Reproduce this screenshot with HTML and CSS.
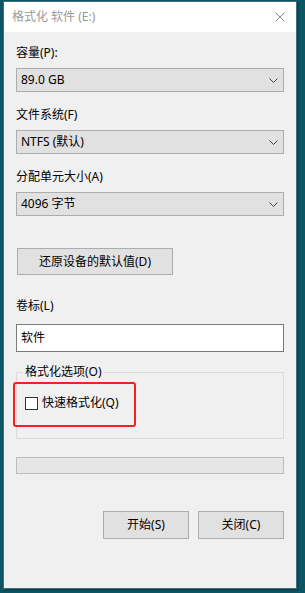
FILE: index.html
```html
<!DOCTYPE html>
<html lang="zh-CN">
<head>
<meta charset="utf-8">
<title>格式化 软件 (E:)</title>
<link rel="stylesheet" href="styles.css">
</head>
<body>
<div class="desktop">
  <div class="dialog">
    <div class="titlebar">
      <span class="title">格式化 软件 (E:)</span>
      <svg class="close" width="10" height="10" viewBox="0 0 10 10"><path d="M0.5 0.5L9.5 9.5M9.5 0.5L0.5 9.5" stroke="#8a8a8a" stroke-width="1" fill="none"/></svg>
    </div>
    <div class="content">
      <div class="field first">
        <div class="label">容量(P):</div>
        <div class="select"><span>89.0 GB</span><svg class="chev" width="9" height="5" viewBox="0 0 9 5"><path d="M0.5 0.5L4.5 4.5L8.5 0.5" stroke="#444" stroke-width="1" fill="none"/></svg></div>
      </div>
      <div class="field">
        <div class="label">文件系统(F)</div>
        <div class="select"><span>NTFS (默认)</span><svg class="chev" width="9" height="5" viewBox="0 0 9 5"><path d="M0.5 0.5L4.5 4.5L8.5 0.5" stroke="#444" stroke-width="1" fill="none"/></svg></div>
      </div>
      <div class="field">
        <div class="label">分配单元大小(A)</div>
        <div class="select"><span>4096 字节</span><svg class="chev" width="9" height="5" viewBox="0 0 9 5"><path d="M0.5 0.5L4.5 4.5L8.5 0.5" stroke="#444" stroke-width="1" fill="none"/></svg></div>
      </div>
      <div class="btn restore">还原设备的默认值(D)</div>
      <div class="field volume">
        <div class="label">卷标(L)</div>
        <div class="input">软件</div>
      </div>
      <fieldset class="group">
        <legend>格式化选项(O)</legend>
        <div class="check-row"><span class="box"></span><span>快速格式化(Q)</span></div>
      </fieldset>
      <div class="progress"></div>
      <div class="actions">
        <div class="btn action">开始(S)</div>
        <div class="btn action">关闭(C)</div>
      </div>
    </div>
    <div class="highlight"></div>
  </div>
</div>
</body>
</html>
```

FILE: styles.css
```css
html, body {
  margin: 0;
  padding: 0;
}
body {
  width: 305px;
  height: 593px;
  overflow: hidden;
  background: #0d5465;
  font-family: "Noto Sans", "Noto Sans CJK SC", sans-serif;
  font-size: 12px;
  color: #000;
}
.desktop {
  padding: 1px 0 0 3px;
}
.dialog {
  position: relative;
  width: 292px;
  height: 586px;
  border: 1px solid #3d6f7c;
  background: #f0f0f0;
  display: flex;
  flex-direction: column;
  box-shadow: 1px 1px 2px rgba(0,0,0,0.35);
}
.titlebar {
  height: 30px;
  background: #fff;
  display: flex;
  align-items: center;
  justify-content: space-between;
  padding: 0 11px 0 8px;
}
.title {
  color: #9a9a9a;
  font-size: 12px;
  line-height: 16px;
}
.close {
  display: block;
}
.content {
  padding: 13px 12px 0 12px;
  display: flex;
  flex-direction: column;
}
.field {
  display: flex;
  flex-direction: column;
  gap: 7px;
  margin-top: 15px;
}
.field.first {
  margin-top: 0;
}
.label {
  line-height: 16px;
  height: 16px;
}
.select {
  height: 22px;
  border: 1px solid #adadad;
  background: #e1e1e1;
  display: flex;
  align-items: center;
  justify-content: space-between;
  padding: 0 5px 0 4px;
  line-height: 16px;
}
.chev {
  display: block;
}
.btn {
  border: 1px solid #adadad;
  background: #e1e1e1;
  display: flex;
  align-items: center;
  justify-content: center;
  line-height: 16px;
}
.restore {
  margin: 32px 0 0 1px;
  width: 154px;
  height: 25px;
}
.field.volume {
  margin-top: 23px;
  gap: 10px;
}
.input {
  height: 26px;
  border: 1px solid #7a7a7a;
  background: #fff;
  display: flex;
  align-items: center;
  padding: 0 4px;
  line-height: 16px;
}
.group {
  margin: 12px 0 0 0;
  padding: 0 0 0 8px;
  border: 1px solid #dcdcdc;
  height: 75px;
  box-sizing: border-box;
}
.group legend {
  margin-left: -2px;
  padding: 0 2px;
  line-height: 16px;
}
.check-row {
  display: flex;
  align-items: center;
  gap: 4px;
  margin-top: 15px;
  line-height: 16px;
}
.box {
  width: 11px;
  height: 11px;
  border: 1px solid #333;
  background: #fff;
}
.progress {
  margin-top: 18px;
  height: 15px;
  border: 1px solid #bcbcbc;
  background: #e6e6e6;
}
.actions {
  margin-top: 37px;
  display: flex;
  justify-content: flex-end;
  gap: 9px;
}
.action {
  width: 84px;
  height: 26px;
}
.highlight {
  position: absolute;
  left: 9px;
  top: 380px;
  width: 119px;
  height: 41px;
  border: 2.5px solid #f52020;
  border-radius: 3px;
}
```
